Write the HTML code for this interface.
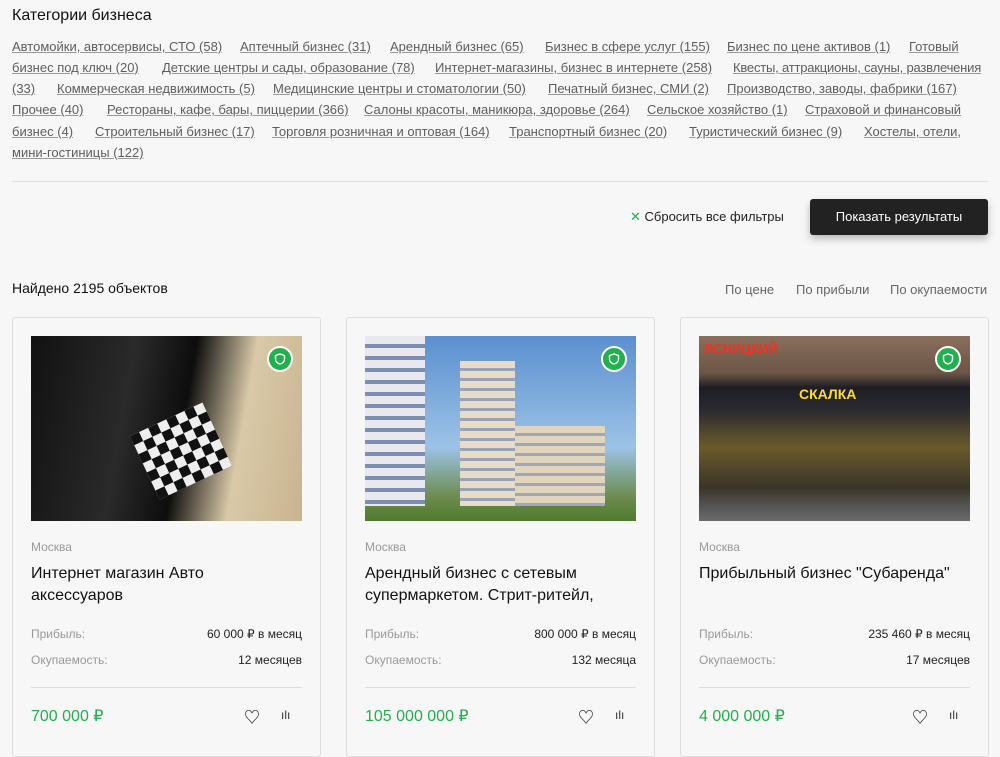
<!DOCTYPE html>
<html><head><meta charset="utf-8"><style>
*{margin:0;padding:0;box-sizing:border-box}
body{width:1000px;height:749px;overflow:hidden;background:#f7f7f7;font-family:"Liberation Sans","Noto Sans CJK SC",sans-serif;color:#1a1a1a;position:relative}
.a{position:absolute}
h1{position:absolute;left:12px;top:7px;font-size:16px;font-weight:normal;color:#111}
.c{position:absolute;font-size:13px;color:#5e5e5e;text-decoration:underline;text-decoration-color:#999;white-space:nowrap;line-height:16px}
.hr{position:absolute;left:12px;top:181px;width:976px;height:1px;background:#ddd}
.btn{position:absolute;left:810px;top:199px;width:178px;height:36px;background:#222;color:#fff;font-size:13px;text-align:center;line-height:36px;border-radius:3px;box-shadow:0 4px 8px rgba(0,0,0,.25)}
.card{position:absolute;top:317px;width:309px;height:440px;background:#f7f7f7;border:1px solid #ddd;border-radius:3px}
.img{position:absolute;left:18px;top:18px;width:271px;height:185px;overflow:hidden}
.sh{position:absolute;right:9px;top:10px;width:26px;height:26px;border-radius:50%;background:#1fb14b;border:2px solid #fff}
.sh svg{position:absolute;left:5px;top:5px}
.city{position:absolute;left:18px;top:222px;font-size:12px;color:#999}
.tt{position:absolute;left:18px;top:245px;font-size:16px;line-height:22px;color:#111;width:275px}
.lb{position:absolute;left:18px;font-size:12px;color:#999}
.vl{position:absolute;right:18px;font-size:12px;color:#222}
.ln{position:absolute;left:18px;right:18px;top:369px;height:1px;background:#ddd}
.pr{position:absolute;left:18px;top:388px;font-size:16px;color:#1fb14b}
</style></head><body>
<h1>Категории бизнеса</h1>
<div class="c" style="left:12px;top:39px">Автомойки, автосервисы, СТО (58)</div>
<div class="c" style="left:240px;top:39px">Аптечный бизнес (31)</div>
<div class="c" style="left:390px;top:39px">Арендный бизнес (65)</div>
<div class="c" style="left:545px;top:39px">Бизнес в сфере услуг (155)</div>
<div class="c" style="left:727px;top:39px">Бизнес по цене активов (1)</div>
<div class="c" style="left:909px;top:39px">Готовый</div>
<div class="c" style="left:12px;top:60px">бизнес под ключ (20)</div>
<div class="c" style="left:162px;top:60px">Детские центры и сады, образование (78)</div>
<div class="c" style="left:435px;top:60px">Интернет-магазины, бизнес в интернете (258)</div>
<div class="c" style="left:733px;top:60px;letter-spacing:-0.2px">Квесты, аттракционы, сауны, развлечения</div>
<div class="c" style="left:12px;top:81px">(33)</div>
<div class="c" style="left:57px;top:81px">Коммерческая недвижимость (5)</div>
<div class="c" style="left:273px;top:81px">Медицинские центры и стоматологии (50)</div>
<div class="c" style="left:548px;top:81px">Печатный бизнес, СМИ (2)</div>
<div class="c" style="left:727px;top:81px">Производство, заводы, фабрики (167)</div>
<div class="c" style="left:12px;top:102px">Прочее (40)</div>
<div class="c" style="left:107px;top:102px">Рестораны, кафе, бары, пиццерии (366)</div>
<div class="c" style="left:364px;top:102px">Салоны красоты, маникюра, здоровье (264)</div>
<div class="c" style="left:647px;top:102px">Сельское хозяйство (1)</div>
<div class="c" style="left:805px;top:102px">Страховой и финансовый</div>
<div class="c" style="left:12px;top:124px">бизнес (4)</div>
<div class="c" style="left:95px;top:124px">Строительный бизнес (17)</div>
<div class="c" style="left:272px;top:124px">Торговля розничная и оптовая (164)</div>
<div class="c" style="left:509px;top:124px">Транспортный бизнес (20)</div>
<div class="c" style="left:689px;top:124px">Туристический бизнес (9)</div>
<div class="c" style="left:864px;top:124px">Хостелы, отели,</div>
<div class="c" style="left:12px;top:145px">мини-гостиницы (122)</div>
<div class="hr"></div>
<div class="a" style="left:630px;top:209px;font-size:13px;color:#222"><span style="color:#1fb14b">✕</span> Сбросить все фильтры</div>
<div class="btn">Показать результаты</div>
<div class="a" style="left:12px;top:280px;font-size:14px;color:#111">Найдено 2195 объектов</div>
<div class="a" style="left:725px;top:282px;font-size:13px;color:#666">По цене</div>
<div class="a" style="left:796px;top:282px;font-size:13px;color:#666">По прибыли</div>
<div class="a" style="left:890px;top:282px;font-size:13px;color:#666">По окупаемости</div>

<div class="card" style="left:12px">
<div class="img" style="background:linear-gradient(100deg,#111 0%,#2a2a2a 35%,#0d0d0d 55%,#d9c9a8 75%,#c8b48f 100%)">
<div class="a" style="left:110px;top:80px;width:80px;height:70px;background:repeating-conic-gradient(#eee 0 25%,#111 0 50%) 0 0/20px 20px;transform:rotate(-25deg)"></div>
<div class="sh"><svg width="12" height="12" viewBox="0 0 12 12"><path d="M6 1L10.5 2.5V6C10.5 8.5 8.5 10.3 6 11C3.5 10.3 1.5 8.5 1.5 6V2.5Z" fill="none" stroke="#fff" stroke-width="1.4"/></svg></div></div>
<div class="city">Москва</div>
<div class="tt" style="width:200px">Интернет магазин Авто аксессуаров</div>
<div class="lb" style="top:309px">Прибыль:</div><div class="vl" style="top:309px">60 000 ₽ в месяц</div>
<div class="lb" style="top:335px">Окупаемость:</div><div class="vl" style="top:335px">12 месяцев</div>
<div class="ln"></div><div class="pr">700 000 ₽</div>
<div class="a" style="left:231px;top:386px;font-size:16px">♡</div>
<div class="a" style="left:268px;top:390px;font-size:12px;color:#333">ılı</div>
</div>

<div class="card" style="left:346px">
<div class="img" style="background:linear-gradient(180deg,#5b8fcf 0%,#9cc3e6 60%,#6b8a4a 88%,#4e7a2e 100%)">
<div class="a" style="left:0;top:0;width:60px;height:170px;background:repeating-linear-gradient(180deg,#e8e8ee 0 8px,#7d8fb0 8px 12px)"></div>
<div class="a" style="left:95px;top:25px;width:55px;height:145px;background:repeating-linear-gradient(180deg,#e6dcc8 0 7px,#9aa3b5 7px 10px)"></div>
<div class="a" style="left:150px;top:90px;width:90px;height:80px;background:repeating-linear-gradient(180deg,#e2d5bd 0 7px,#a0a8b8 7px 10px)"></div>
<div class="sh"><svg width="12" height="12" viewBox="0 0 12 12"><path d="M6 1L10.5 2.5V6C10.5 8.5 8.5 10.3 6 11C3.5 10.3 1.5 8.5 1.5 6V2.5Z" fill="none" stroke="#fff" stroke-width="1.4"/></svg></div></div>
<div class="city">Москва</div>
<div class="tt">Арендный бизнес с сетевым супермаркетом. Стрит-ритейл,</div>
<div class="lb" style="top:309px">Прибыль:</div><div class="vl" style="top:309px">800 000 ₽ в месяц</div>
<div class="lb" style="top:335px">Окупаемость:</div><div class="vl" style="top:335px">132 месяца</div>
<div class="ln"></div><div class="pr">105 000 000 ₽</div>
<div class="a" style="left:231px;top:386px;font-size:16px">♡</div>
<div class="a" style="left:268px;top:390px;font-size:12px;color:#333">ılı</div>
</div>

<div class="card" style="left:680px">
<div class="img" style="background:linear-gradient(180deg,#8a6f5c 0%,#6b5546 20%,#1d1d24 28%,#2a2a30 40%,#6a5a2a 60%,#3a3528 82%,#555 92%,#6a6a6a 100%)">
<div class="a" style="left:5px;top:5px;font-size:13px;font-weight:bold;color:#e32">ЯСНИЦКИЙ</div>
<div class="a" style="left:100px;top:50px;font-size:14px;font-weight:bold;color:#fd2">СКАЛКА</div>
<div class="sh"><svg width="12" height="12" viewBox="0 0 12 12"><path d="M6 1L10.5 2.5V6C10.5 8.5 8.5 10.3 6 11C3.5 10.3 1.5 8.5 1.5 6V2.5Z" fill="none" stroke="#fff" stroke-width="1.4"/></svg></div></div>
<div class="city">Москва</div>
<div class="tt">Прибыльный бизнес "Субаренда"</div>
<div class="lb" style="top:309px">Прибыль:</div><div class="vl" style="top:309px">235 460 ₽ в месяц</div>
<div class="lb" style="top:335px">Окупаемость:</div><div class="vl" style="top:335px">17 месяцев</div>
<div class="ln"></div><div class="pr">4 000 000 ₽</div>
<div class="a" style="left:231px;top:386px;font-size:16px">♡</div>
<div class="a" style="left:268px;top:390px;font-size:12px;color:#333">ılı</div>
</div>
</body></html>
